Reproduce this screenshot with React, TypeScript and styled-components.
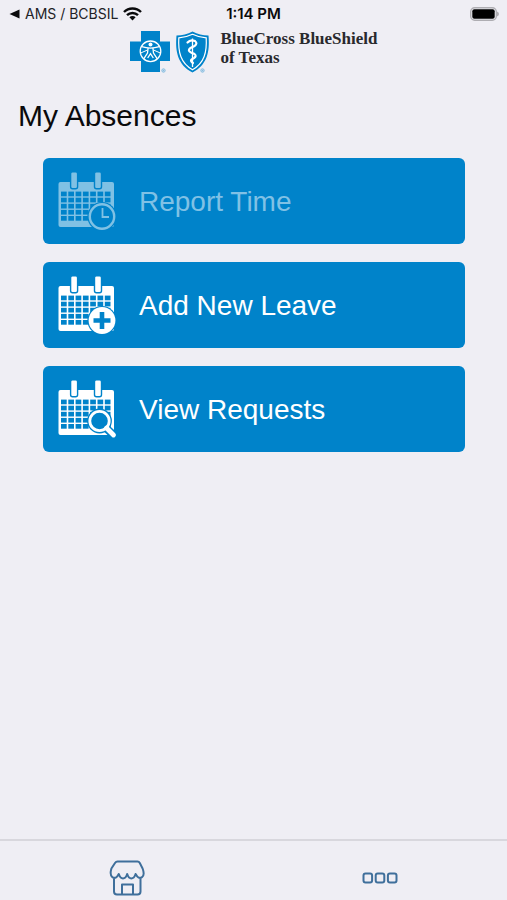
import React from "react";
import styled, { createGlobalStyle } from "styled-components";

const BLUE = "#0083ca";
const PAPER = "#efeef4";
const STEEL = "#3f6f9b";

const GlobalStyle = createGlobalStyle`
  *, *::before, *::after { box-sizing: border-box; }
  body {
    margin: 0;
    background: ${PAPER};
    color: #0a0a0c;
    font-family: "Liberation Sans", Arial, sans-serif;
  }
`;

const Screen = styled.div`
  display: flex;
  flex-direction: column;
  min-height: 100vh;
`;

const StatusBar = styled.div`
  display: grid;
  grid-template-columns: 1fr auto 1fr;
  align-items: center;
  height: 28px;
  padding: 0 8px;
  font-family: Inter, sans-serif;
  font-size: 14px;
  line-height: 20px;
`;

const BackLink = styled.a`
  display: flex;
  align-items: center;
  gap: 5px;
  color: #222226;
  text-decoration: none;
  white-space: nowrap;
`;

const Clock = styled.time`
  font-size: 15px;
  font-weight: 600;
`;

const BatterySlot = styled.div`
  display: flex;
  justify-content: flex-end;
`;

const Brand = styled.header`
  display: flex;
  align-items: flex-start;
  justify-content: center;
  gap: 10px;
`;

const BrandLogo = styled.svg`
  margin-top: 2px;
`;

const BrandName = styled.div`
  padding-top: 1px;
  font-family: "Liberation Serif", serif;
  font-size: 17px;
  font-weight: 700;
  line-height: 19px;
  color: #29292d;
`;

const Main = styled.main`
  flex: 1;
`;

const Title = styled.h1`
  margin: 24px 18px;
  font-size: 30px;
  font-weight: 400;
  line-height: 36px;
`;

const Actions = styled.div`
  display: flex;
  flex-direction: column;
  gap: 18px;
  padding: 0 42px 0 43px;
`;

const ActionButton = styled.button`
  display: flex;
  align-items: center;
  gap: 20px;
  height: 86px;
  padding: 2px 14px 0;
  border: 0;
  border-radius: 6px;
  background: ${BLUE};
  color: #fff;
  font-family: inherit;
  font-size: 28px;
  line-height: 36px;
  text-align: left;
  cursor: pointer;

  &:disabled {
    color: #80c1e5;
    cursor: default;
  }
  &:disabled svg {
    opacity: 0.5;
  }
`;

const TabBar = styled.nav`
  display: grid;
  grid-template-columns: 1fr 1fr;
  height: 61px;
  border-top: 2px solid #d8d7dd;
`;

const Tab = styled.button`
  display: flex;
  align-items: center;
  justify-content: center;
  padding: 14px 0 0;
  border: 0;
  background: none;
  cursor: pointer;
`;

function WifiIcon() {
  return (
    <svg width="19" height="14" viewBox="0 0 19 14" fill="none" stroke="#0a0a0c" strokeWidth="2.4">
      <path d="M1 5 A12 12 0 0 1 18 5" />
      <path d="M4 8.2 A7.8 7.8 0 0 1 15 8.2" />
      <path d="M9.5 13.4 L6.4 10.3 A4.4 4.4 0 0 1 12.6 10.3 Z" fill="#0a0a0c" stroke="none" />
    </svg>
  );
}

function BatteryIcon() {
  return (
    <svg width="29" height="14" viewBox="0 0 29 14">
      <rect x="0.7" y="0.7" width="25.6" height="12.6" rx="4" fill={PAPER} stroke="#aeadb2" strokeWidth="1.4" />
      <rect x="2.3" y="2.3" width="22.4" height="9.4" rx="2" fill="#000" />
      <path d="M27 4.5 Q29 5.4 29 7 Q29 8.6 27 9.5 Z" fill="#aeadb2" />
    </svg>
  );
}

function BrandMark() {
  return (
    <BrandLogo width="81" height="44" viewBox="0 0 81 44">
      <path d="M11 1 H30 V11.5 H40 V31 H30 V42 H11 V31 H0 V11.5 H11 Z" fill={BLUE} />
      <g fill="none" stroke="#fff" strokeWidth="1.3">
        <circle cx="20.5" cy="21.3" r="10.3" />
        <path d="M11.7 16.6 Q20.5 19.5 29.3 16.6" />
        <path d="M18.1 18 L17.5 23 L13.7 28.8 M22.9 18 L23.5 23 L27.3 28.8 M17.7 28 L20.5 23.6 L23.3 28" />
        <path d="M10.7 23 L17.5 20 M30.3 23 L23.5 20" strokeWidth="1" />
      </g>
      <circle cx="20.5" cy="14.4" r="2" fill="#fff" />
      <path
        d="M46.5 5.5 Q55 5.5 62.5 1.5 Q70 5.5 78.5 5.5 C80 22 77 35 62.5 42.5 C48 35 45 22 46.5 5.5 Z"
        fill={BLUE}
      />
      <path
        d="M48.8 7.8 Q56 7.5 62.5 4.3 Q69 7.5 76.2 7.8 C77 22 74.5 33 62.5 39.8 C50.5 33 48 22 48.8 7.8 Z"
        fill="none"
        stroke="#fff"
        strokeWidth="1.2"
      />
      <path d="M62.5 8.5 V37" stroke="#fff" strokeWidth="1.3" />
      <path
        d="M57.5 12.5 Q60.5 9 65 11 Q68 13.5 64.5 16 L60.5 18 Q57 20.5 61 22.5 L64.5 24 Q67 26 64 28 L61.5 29.5 Q60 31 63 33"
        fill="none"
        stroke="#fff"
        strokeWidth="2.2"
        strokeLinecap="round"
      />
      <g fill="none" stroke="#5aa9d8" strokeWidth="0.7">
        <circle cx="33.5" cy="40.5" r="1.7" />
        <circle cx="33.5" cy="40.5" r="0.5" />
        <circle cx="72.5" cy="40.5" r="1.7" />
        <circle cx="72.5" cy="40.5" r="0.5" />
      </g>
    </BrandLogo>
  );
}

type Badge = "clock" | "plus" | "search";

const COLUMNS = [0, 1, 2, 3, 4, 5, 6];
const ROWS = [0, 1, 2, 3, 4];

function CalendarIcon({ badge }: { badge: Badge }) {
  return (
    <svg width="62" height="60" viewBox="0 0 62 60" fill="none">
      <rect x="1.5" y="10" width="55.5" height="45" rx="2" fill="#fff" />
      <g fill={BLUE}>
        {ROWS.map((row) =>
          COLUMNS.map((col) => (
            <rect key={`${row}-${col}`} x={4 + col * 7.3} y={19.6 + row * 6.1} width="5.7" height="4.7" />
          )),
        )}
      </g>
      <g fill="#fff" stroke={BLUE} strokeWidth="1.4">
        <rect x="13.6" y="-0.3" width="7" height="17" rx="2" />
        <rect x="37.5" y="-0.3" width="7" height="17" rx="2" />
      </g>
      {badge === "clock" && (
        <g>
          <circle cx="45" cy="44.5" r="14.6" fill={BLUE} />
          <circle cx="45" cy="44.5" r="12.2" stroke="#fff" strokeWidth="2.4" />
          <path d="M45.5 36 V45 H52" stroke="#fff" strokeWidth="1.8" />
        </g>
      )}
      {badge === "plus" && (
        <g>
          <circle cx="45" cy="44.5" r="14.6" fill={BLUE} />
          <circle cx="45" cy="44.5" r="13.4" fill="#fff" />
          <path d="M45 36 V53 M36.5 44.5 H53.5" stroke={BLUE} strokeWidth="4.6" />
        </g>
      )}
      {badge === "search" && (
        <g>
          <path d="M49 48 L56.5 55" stroke={BLUE} strokeWidth="8" strokeLinecap="round" />
          <circle cx="42.5" cy="41" r="12.4" fill={BLUE} />
          <circle cx="42.5" cy="41" r="9.7" stroke="#fff" strokeWidth="2.8" />
          <path d="M49.5 48 L56.5 55" stroke="#fff" strokeWidth="4.8" strokeLinecap="round" />
        </g>
      )}
    </svg>
  );
}

function StoreIcon() {
  return (
    <svg width="36" height="36" viewBox="0 0 36 36" fill="none" stroke={STEEL} strokeWidth="2" strokeLinejoin="round">
      <path d="M8.5 1.5 H28.5 Q30 1.5 30.8 3 L33.6 8.5 Q36 15 33 17.2 Q29.5 19.5 26.6 14 Q25 18.5 22.3 18.5 Q19.8 18.5 18.2 14 Q16.6 18.5 14 18.5 Q11.4 18.5 9.8 14 Q7 19.5 3.4 17.2 Q0.5 15 2.4 8.5 L6 3 Q7 1.5 8.5 1.5 Z" />
      <path d="M5 18.5 V31.5 Q5 34.5 8 34.5 H28.5 Q31.5 34.5 31.5 31.5 V18.5" />
      <path d="M13 34 V24.5 H24 V34" />
    </svg>
  );
}

function MoreIcon() {
  return (
    <svg width="36" height="12" viewBox="0 0 36 12" fill="none" stroke={STEEL} strokeWidth="2">
      <rect x="1.5" y="1.5" width="8.6" height="9" rx="2" />
      <rect x="13.7" y="1.5" width="8.6" height="9" rx="2" />
      <rect x="25.9" y="1.5" width="8.6" height="9" rx="2" />
    </svg>
  );
}

const actions: { label: string; badge: Badge; disabled?: boolean }[] = [
  { label: "Report Time", badge: "clock", disabled: true },
  { label: "Add New Leave", badge: "plus" },
  { label: "View Requests", badge: "search" },
];

export default function App() {
  return (
    <Screen>
      <GlobalStyle />
      <StatusBar>
        <BackLink href="#">
          <svg width="12" height="10" viewBox="0 0 12 10">
            <path d="M1.5 5 L11.5 0.5 V9.5 Z" fill="#0a0a0c" />
          </svg>
          AMS / BCBSIL
          <WifiIcon />
        </BackLink>
        <Clock>1:14 PM</Clock>
        <BatterySlot>
          <BatteryIcon />
        </BatterySlot>
      </StatusBar>
      <Brand>
        <BrandMark />
        <BrandName>
          BlueCross BlueShield
          <br />
          of Texas
        </BrandName>
      </Brand>
      <Main>
        <Title>My Absences</Title>
        <Actions>
          {actions.map(({ label, badge, disabled }) => (
            <ActionButton key={label} type="button" disabled={disabled}>
              <CalendarIcon badge={badge} />
              {label}
            </ActionButton>
          ))}
        </Actions>
      </Main>
      <TabBar>
        <Tab type="button" aria-label="Home">
          <StoreIcon />
        </Tab>
        <Tab type="button" aria-label="More">
          <MoreIcon />
        </Tab>
      </TabBar>
    </Screen>
  );
}
